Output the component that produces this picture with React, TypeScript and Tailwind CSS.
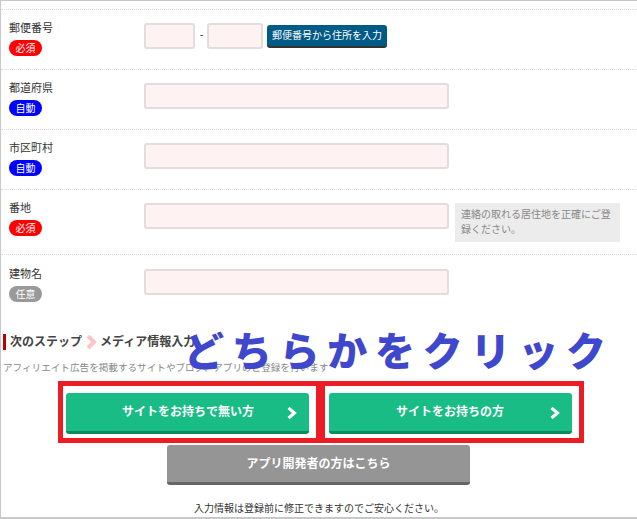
const sans = "font-['Liberation_Sans','Noto_Sans_CJK_JP',sans-serif]";

interface RowProps {
  label: string;
  badge: string;
  badgeClass: string;
  height: string;
  children: React.ReactNode;
}

function Row({ label, badge, badgeClass, height, children }: RowProps) {
  return (
    <div className={`flex border-b border-dotted border-[#d8d8d8] pl-2 ${height}`}>
      <div className="w-[135px] shrink-0 pt-[11px]">
        <div className="text-[11px] leading-[14px] text-[#333]">{label}</div>
        <div
          className={`mt-[5px] flex h-4 w-[33px] items-center justify-center rounded-full text-[10px] text-white ${badgeClass}`}
        >
          {badge}
        </div>
      </div>
      <div className="flex items-start pt-[13px]">{children}</div>
    </div>
  );
}

function TextBox({ width }: { width: string }) {
  return (
    <div className={`h-[26px] rounded-[3px] border-2 border-[#e3dcdc] bg-[#fff2f2] ${width}`} />
  );
}

function GreenButton({ label, pad }: { label: string; pad: string }) {
  return (
    <div className="relative flex h-[41px] w-[243px] items-center rounded-[3px] border-b-[3px] border-[#0b8a5e] bg-[#1abc85] text-[12px] font-bold text-white">
      <span className={pad}>{label}</span>
      <svg
        viewBox="0 0 12 14"
        className="absolute right-[11px] top-[13px] h-[14px] w-3"
        fill="none"
        stroke="white"
        strokeWidth="3"
      >
        <path d="M2.5 2l6 5-6 5" />
      </svg>
    </div>
  );
}

export default function App() {
  return (
    <div
      className={`relative h-[519px] w-[637px] overflow-hidden border-b-2 border-l border-t border-[#c8c8c8] bg-white ${sans}`}
    >
      <div className="h-[9px] border-b border-dotted border-[#d8d8d8]" />
      <Row label="郵便番号" badge="必須" badgeClass="bg-[#ff0000]" height="h-[60px]">
        <TextBox width="w-[51px]" />
        <span className="mx-[5px] mt-1 w-[2px] text-[10px] text-[#333]">-</span>
        <TextBox width="w-[56px]" />
        <div className="ml-1 mt-[2px] flex h-[23px] w-[120px] items-center justify-center rounded-[3px] border-b-2 border-[#333] bg-[#005a86] text-[10px] text-white">
          郵便番号から住所を入力
        </div>
      </Row>
      <Row label="都道府県" badge="自動" badgeClass="bg-[#0000ff]" height="h-[60px]">
        <TextBox width="w-[305px]" />
      </Row>
      <Row label="市区町村" badge="自動" badgeClass="bg-[#0000ff]" height="h-[60px]">
        <TextBox width="w-[305px]" />
      </Row>
      <Row label="番地" badge="必須" badgeClass="bg-[#ff0000]" height="h-[65px]">
        <TextBox width="w-[305px]" />
        <div className="ml-[6px] h-[39px] w-[165px] bg-[#ececec] py-[4px] pl-[6px] pr-[2px] text-[10px] leading-[15px] text-[#888]">
          連絡の取れる居住地を正確にご登録ください。
        </div>
      </Row>
      <div className="flex h-[79px] pl-2">
        <div className="w-[135px] shrink-0 pt-3">
          <div className="text-[11px] leading-[14px] text-[#333]">建物名</div>
          <div className="mt-[5px] flex h-4 w-[33px] items-center justify-center rounded-full bg-[#999] text-[10px] text-white">
            任意
          </div>
        </div>
        <div className="pt-[14px]">
          <TextBox width="w-[305px]" />
        </div>
      </div>

      <div className="ml-[2px] flex h-4 items-center border-l-[3px] border-[#c00000] pl-1 text-[12px] font-bold text-[#444]">
        <span>次のステップ</span>
        <svg
          viewBox="0 0 11 16"
          className="ml-1 mr-[3px] h-4 w-[11px]"
          fill="none"
          stroke="#ffc4c8"
          strokeWidth="4"
        >
          <path d="M2 2l6 6-6 6" />
        </svg>
        <span>メディア情報入力</span>
      </div>
      <div className="ml-[2px] mt-[11px] whitespace-nowrap text-[9.6px] leading-[14px] text-[#888]">
        アフィリエイト広告を掲載するサイトやブログ、アプリのご登録を行います
      </div>

      <div className="mt-[18px] flex justify-start gap-[20px] pl-[65px]">
        <GreenButton label="サイトをお持ちで無い方" pad="pl-[56px]" />
        <GreenButton label="サイトをお持ちの方" pad="pl-[67px]" />
      </div>
      <div className="ml-[166px] mt-[11px] flex h-10 w-[303px] items-center justify-center rounded-[3px] border-b-[3px] border-[#666] bg-[#959595] text-[12px] font-bold text-white">
        アプリ開発者の方はこちら
      </div>
      <div className="mt-[17px] text-center text-[10px] leading-[14px] text-[#333]">
        入力情報は登録前に修正できますのでご安心ください。
      </div>

      {/* annotation drawn over the page */}
      <div className="absolute left-[57px] top-[380px] h-[62px] w-[263px] border-[5px] border-[#ed1c24]" />
      <div className="absolute left-[319px] top-[380px] h-[62px] w-[264px] border-[5px] border-[#ed1c24]" />
      <div className="absolute left-[183px] top-[326px] whitespace-nowrap text-[40px] font-black leading-[50px] tracking-[7.75px] text-[#3f48cc]">
        どちらかをクリック
      </div>
    </div>
  );
}
